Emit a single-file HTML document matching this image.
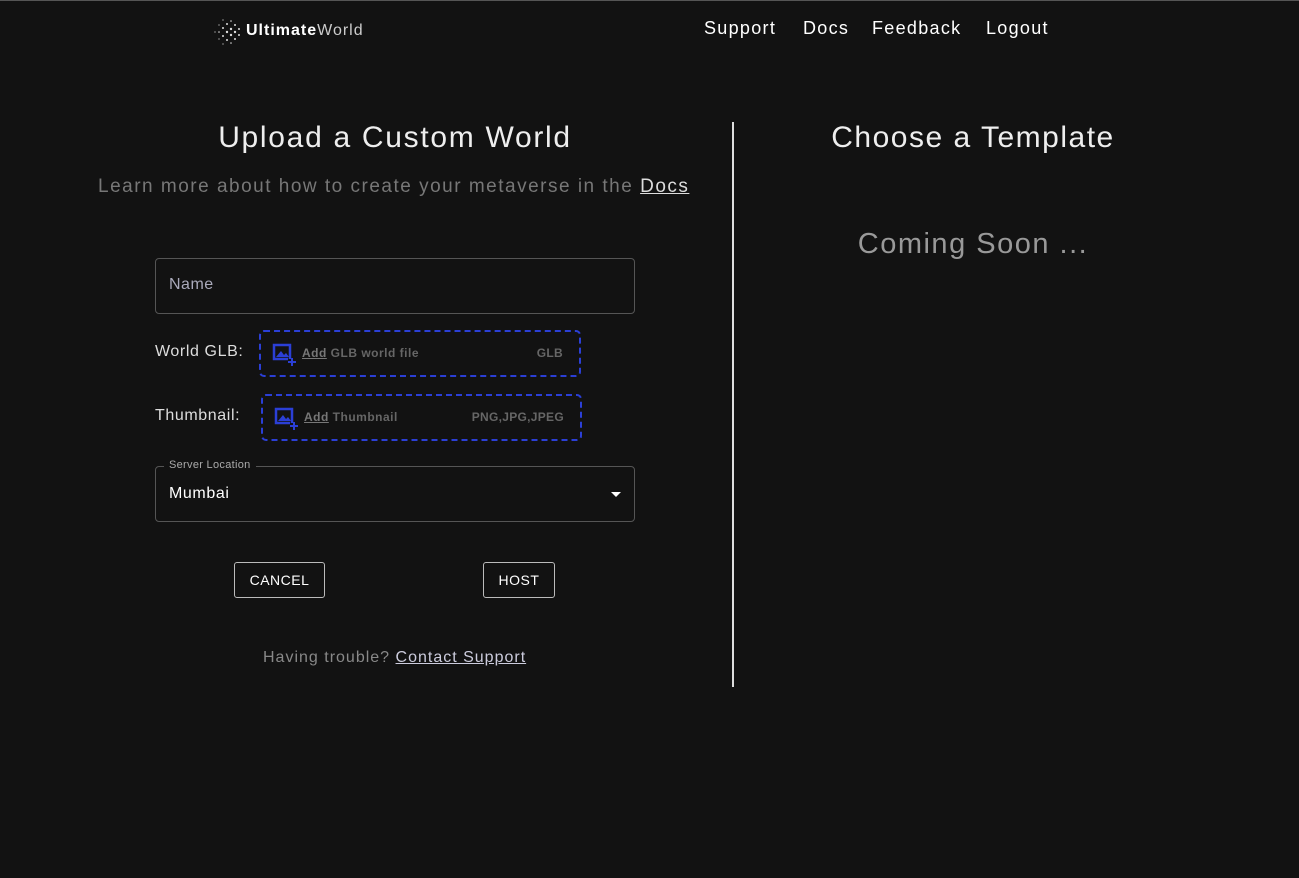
<!DOCTYPE html>
<html><head><style>
body{margin:0;width:1299px;height:878px;background:#121212;font-family:"Liberation Sans",sans-serif;color:#fff;position:relative;overflow:hidden;border-top:1px solid #555;box-sizing:border-box}
.a{position:absolute}
.nav{font-size:18px;top:17px;letter-spacing:1.3px}
.box{position:absolute;border:2px dashed #2b3fd6;border-radius:5px;box-sizing:border-box;height:47px}
.box .t{position:absolute;left:41px;top:14px;font-size:12px;font-weight:bold;color:#666;letter-spacing:.5px}
.box .t u{color:#777}
.box .r{position:absolute;right:16px;top:14px;font-size:12px;font-weight:bold;color:#666;letter-spacing:.3px}
.box svg{position:absolute;left:10px;top:9px}
.btn{position:absolute;border:1px solid #bbb;border-radius:3px;font-size:14px;text-align:center;line-height:35px;height:36px;box-sizing:border-box;top:561px;letter-spacing:.5px}
</style></head><body>
<svg class="a" style="left:210px;top:14px" width="34" height="34"><g fill="#ddd">
<circle cx="17" cy="17" r="1.2"/><circle cx="21" cy="14" r="1.2"/><circle cx="21" cy="20" r="1.2"/><circle cx="25" cy="17" r="1.2"/><circle cx="13" cy="13" r="1"/><circle cx="13" cy="21" r="1"/><circle cx="17" cy="9" r="1"/><circle cx="17" cy="25" r="1"/><circle cx="25" cy="10" r="1"/><circle cx="25" cy="24" r="1"/><circle cx="29" cy="14" r="1"/><circle cx="29" cy="20" r="1"/><circle cx="9" cy="17" r=".8"/><circle cx="21" cy="6" r=".8"/><circle cx="21" cy="28" r=".8"/><circle cx="9" cy="10" r=".6"/><circle cx="9" cy="24" r=".6"/><circle cx="5" cy="17" r=".6"/><circle cx="13" cy="5" r=".6"/><circle cx="13" cy="29" r=".6"/></g></svg>
<div class="a" style="left:246px;top:21px;font-size:16px;letter-spacing:1px"><b>Ultimate</b><span style="color:#ccc">World</span></div>
<div class="a nav" style="left:704px">Support</div>
<div class="a nav" style="left:803px">Docs</div>
<div class="a nav" style="left:872px">Feedback</div>
<div class="a nav" style="left:986px">Logout</div>
<div class="a" style="left:100px;width:590px;text-align:center;top:120px;font-size:30px;color:#eee;letter-spacing:1.7px">Upload a Custom World</div>
<div class="a" style="left:98px;top:175px;font-size:19px;color:#777;letter-spacing:1.5px">Learn more about how to create your metaverse in the <u style="color:#ddd">Docs</u></div>
<div class="a" style="left:732px;top:121px;width:2px;height:565px;background:#ddd"></div>
<div class="a" style="left:773px;width:400px;text-align:center;top:120px;font-size:30px;color:#eee;letter-spacing:1.5px">Choose a Template</div>
<div class="a" style="left:773px;width:400px;text-align:center;top:227px;font-size:29px;color:#999;letter-spacing:1.5px">Coming Soon ...</div>
<div class="a" style="left:155px;top:257px;width:480px;height:56px;border:1px solid #555;border-radius:4px;box-sizing:border-box"><span style="position:absolute;left:13px;top:17px;font-size:16px;color:#aab;letter-spacing:.5px">Name</span></div>
<div class="a" style="left:155px;top:342px;font-size:16px;color:#ddd;letter-spacing:.6px">World GLB:</div>
<div class="box" style="left:259px;top:329px;width:322px"><svg width="26" height="26" viewBox="0 0 26 26"><path d="M19 18V4H3v14h14" fill="none" stroke="#2b3fd6" stroke-width="2.5"/><path d="M5 16l5-6 3 4 2-2 3 4z" fill="#2b3fd6"/><path d="M21 17v8M17 21h8" stroke="#2b3fd6" stroke-width="2"/></svg><span class="t"><u>Add</u> GLB world file</span><span class="r">GLB</span></div>
<div class="a" style="left:155px;top:406px;font-size:16px;color:#ddd;letter-spacing:.6px">Thumbnail:</div>
<div class="box" style="left:261px;top:393px;width:321px"><svg width="26" height="26" viewBox="0 0 26 26"><path d="M19 18V4H3v14h14" fill="none" stroke="#2b3fd6" stroke-width="2.5"/><path d="M5 16l5-6 3 4 2-2 3 4z" fill="#2b3fd6"/><path d="M21 17v8M17 21h8" stroke="#2b3fd6" stroke-width="2"/></svg><span class="t"><u>Add</u> Thumbnail</span><span class="r">PNG,JPG,JPEG</span></div>
<div class="a" style="left:155px;top:465px;width:480px;height:56px;border:1px solid #555;border-radius:4px;box-sizing:border-box">
<span style="position:absolute;left:8px;top:-8px;background:#121212;padding:0 5px;font-size:11px;color:#aaa;letter-spacing:.3px">Server Location</span>
<span style="position:absolute;left:13px;top:18px;font-size:16px;letter-spacing:.6px">Mumbai</span>
<span style="position:absolute;right:13px;top:25px;border:5px solid transparent;border-top-color:#fff;border-bottom:0"></span></div>
<div class="btn" style="left:234px;width:91px">CANCEL</div>
<div class="btn" style="left:483px;width:72px">HOST</div>
<div class="a" style="left:263px;top:648px;font-size:16px;color:#888;letter-spacing:1px">Having trouble? <u style="color:#ccd">Contact Support</u></div>
</body></html>
